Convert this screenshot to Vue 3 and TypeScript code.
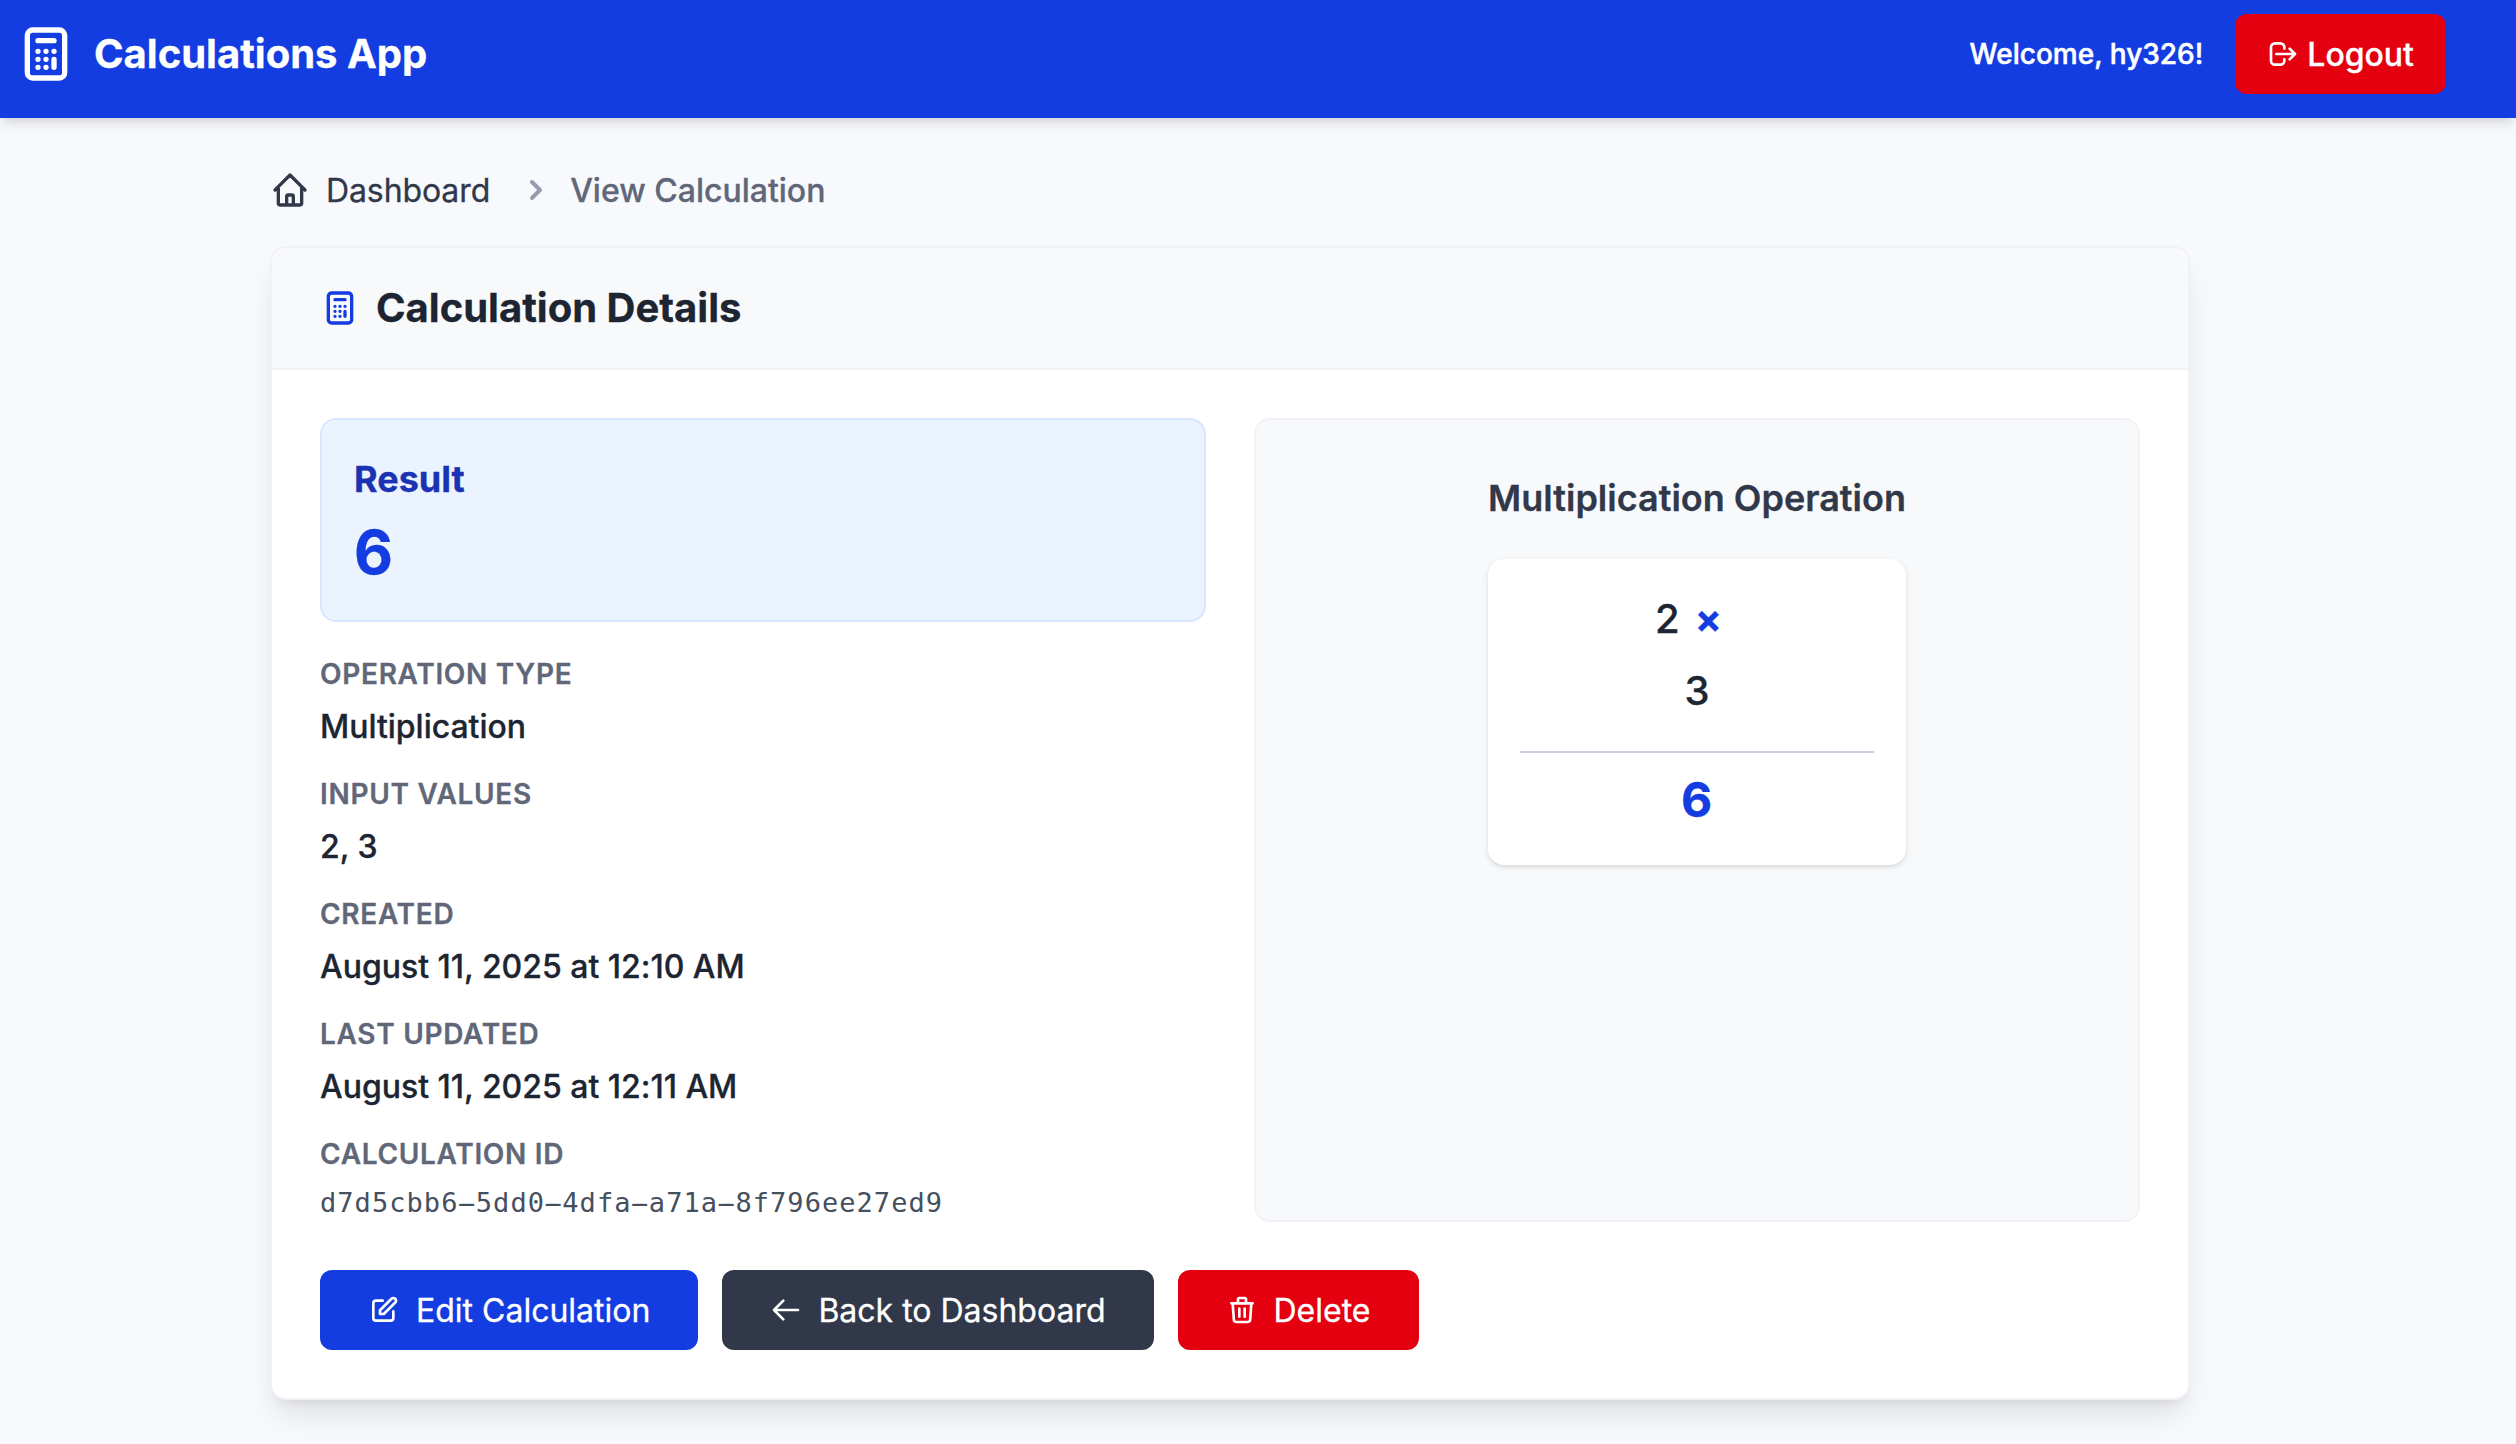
<script setup lang="ts">
interface Detail {
  label: string
  value: string
}

const username = 'hy326'
const inputs: number[] = [2, 3]
const result = inputs.reduce((product, n) => product * n, 1)

const details: Detail[] = [
  { label: 'Operation Type', value: 'Multiplication' },
  { label: 'Input Values', value: inputs.join(', ') },
  { label: 'Created', value: 'August 11, 2025 at 12:10 AM' },
  { label: 'Last Updated', value: 'August 11, 2025 at 12:11 AM' },
]

// The id is split on its hyphens so that they can be drawn at full cell width.
const idParts = 'd7d5cbb6-5dd0-4dfa-a71a-8f796ee27ed9'.split(/(-)/)

const icons = {
  calculator:
    'M9 7h6m0 10v-3m-3 3h.01M9 17h.01M9 14h.01M12 14h.01M15 11h.01M12 11h.01M9 11h.01M7 21h10a2 2 0 002-2V5a2 2 0 00-2-2H7a2 2 0 00-2 2v14a2 2 0 002 2z',
  logout:
    'M17 16l4-4m0 0l-4-4m4 4H7m6 4v1a3 3 0 01-3 3H6a3 3 0 01-3-3V7a3 3 0 013-3h4a3 3 0 013 3v1',
  home: 'M3 12l2-2m0 0l7-7 7 7M5 10v10a1 1 0 001 1h3m10-11l2 2m-2-2v10a1 1 0 01-1 1h-3m-6 0a1 1 0 001-1v-4a1 1 0 011-1h2a1 1 0 011 1v4a1 1 0 001 1m-6 0h6',
  edit: 'M11 5H6a2 2 0 00-2 2v11a2 2 0 002 2h11a2 2 0 002-2v-5m-1.414-9.414a2 2 0 112.828 2.828L11.828 15H9v-2.828l8.586-8.586z',
  back: 'M10 19l-7-7m0 0l7-7m-7 7h18',
  trash:
    'M19 7l-.867 12.142A2 2 0 0116.138 21H7.862a2 2 0 01-1.995-1.858L5 7m5 4v6m4-6v6m1-10V4a1 1 0 00-1-1h-4a1 1 0 00-1 1v3M4 7h16',
}
</script>

<template>
  <div class="page">
    <header class="topbar">
      <div class="topbar-inner">
        <div class="brand">
          <svg class="icon icon-xl" viewBox="0 0 24 24"><path :d="icons.calculator" /></svg>
          <span class="brand-name">Calculations App</span>
        </div>
        <div class="session">
          <span class="welcome">Welcome, {{ username }}!</span>
          <button class="btn btn-logout" type="button">
            <svg class="icon icon-sm" viewBox="0 0 24 24"><path :d="icons.logout" /></svg>
            <span>Logout</span>
          </button>
        </div>
      </div>
    </header>

    <main class="content">
      <nav class="breadcrumb">
        <a class="crumb-link">
          <svg class="icon icon-md" viewBox="0 0 24 24"><path :d="icons.home" /></svg>
          <span>Dashboard</span>
        </a>
        <svg class="chevron" viewBox="0 0 20 20">
          <path
            d="M7.293 14.707a1 1 0 010-1.414L10.586 10 7.293 6.707a1 1 0 011.414-1.414l4 4a1 1 0 010 1.414l-4 4a1 1 0 01-1.414 0z"
          />
        </svg>
        <span class="crumb-current">View Calculation</span>
      </nav>

      <section class="card">
        <div class="card-header">
          <svg class="icon icon-md accent" viewBox="0 0 24 24"><path :d="icons.calculator" /></svg>
          <h1>Calculation Details</h1>
        </div>

        <div class="card-body">
          <div class="columns">
            <div class="summary">
              <div class="result">
                <h2>Result</h2>
                <p>{{ result }}</p>
              </div>
              <dl class="details">
                <div v-for="item in details" :key="item.label" class="detail">
                  <dt>{{ item.label }}</dt>
                  <dd>{{ item.value }}</dd>
                </div>
                <div class="detail">
                  <dt>Calculation ID</dt>
                  <dd class="mono"><span v-for="(part, i) in idParts" :key="i" :class="{ dash: part === '-' }">{{ part }}</span></dd>
                </div>
              </dl>
            </div>

            <div class="visual">
              <h3>Multiplication Operation</h3>
              <div class="sheet">
                <div v-for="(n, i) in inputs" :key="i" class="operand">
                  <span>{{ n }}</span>
                  <span v-if="i < inputs.length - 1" class="operator">×</span>
                </div>
                <div class="rule"></div>
                <div class="total">{{ result }}</div>
              </div>
            </div>
          </div>

          <div class="actions">
            <button class="btn btn-primary" type="button">
              <svg class="icon icon-sm" viewBox="0 0 24 24"><path :d="icons.edit" /></svg>
              <span>Edit Calculation</span>
            </button>
            <button class="btn btn-dark" type="button">
              <svg class="icon icon-sm" viewBox="0 0 24 24"><path :d="icons.back" /></svg>
              <span>Back to Dashboard</span>
            </button>
            <button class="btn btn-danger" type="button">
              <svg class="icon icon-sm" viewBox="0 0 24 24"><path :d="icons.trash" /></svg>
              <span>Delete</span>
            </button>
          </div>
        </div>
      </section>
    </main>
  </div>
</template>

<style>
body {
  margin: 0;
  background: #f8f9fd;
}
</style>

<style scoped>
* {
  box-sizing: border-box;
}

.page {
  min-height: 1444px;
  overflow: hidden;
  background: #f8f9fd;
  color: #1c2531;
  font-family: Inter, 'Liberation Sans', sans-serif;
  font-size: 32px;
  line-height: 48px;
  -webkit-text-stroke: 0.3px currentColor;
}

h1,
h2,
h3,
p,
dl,
dd {
  margin: 0;
}

.icon {
  flex: none;
  fill: none;
  stroke: currentColor;
  stroke-width: 2;
  stroke-linecap: round;
  stroke-linejoin: round;
}

.icon-sm {
  width: 32px;
  height: 32px;
}

.icon-md {
  width: 40px;
  height: 40px;
}

.icon-xl {
  width: 64px;
  height: 64px;
}

.accent {
  color: #143de1;
}

/* Top bar */
.topbar {
  height: 118px;
  background: #143de1;
  color: #fff;
  box-shadow:
    0 8px 12px -2px rgba(0, 0, 0, 0.1),
    0 4px 8px -4px rgba(0, 0, 0, 0.1);
}

.topbar-inner {
  display: flex;
  align-items: center;
  justify-content: space-between;
  width: 2460px;
  height: 108px;
  padding: 0 14px;
}

.brand {
  display: flex;
  align-items: center;
  gap: 16px;
}

.brand-name {
  font-size: 40px;
  line-height: 56px;
  font-weight: 700;
}

.session {
  display: flex;
  align-items: center;
  gap: 32px;
}

.welcome {
  font-size: 28px;
  line-height: 40px;
  font-weight: 500;
  -webkit-text-stroke: 0.5px currentColor;
}

.btn {
  display: inline-flex;
  align-items: center;
  gap: 16px;
  height: 80px;
  padding: 0 48px;
  border: 0;
  border-radius: 12px;
  color: #fff;
  font: inherit;
  white-space: nowrap;
}

.btn span,
.breadcrumb span {
  padding-top: 2px;
}

.btn-logout {
  gap: 8px;
  padding: 0 32px;
  background: #e4000f;
  font-weight: 500;
}

.btn-primary {
  background: #143de1;
}

.btn-dark {
  background: #303849;
}

.btn-danger {
  min-width: 241px;
  background: #e4000f;
}

/* Page body */
.content {
  width: 1920px;
  margin-left: 270px;
  padding-top: 48px;
}

.breadcrumb {
  display: flex;
  align-items: center;
  height: 48px;
  margin-bottom: 32px;
}

.crumb-link {
  display: inline-flex;
  align-items: center;
  gap: 16px;
  color: #303849;
  letter-spacing: -0.1px;
}

.chevron {
  width: 40px;
  height: 40px;
  margin: 0 14px 0 26px;
  fill: #959cae;
}

.crumb-current {
  color: #5f6778;
  font-weight: 500;
}

.card {
  border: 2px solid #f1f2f5;
  border-radius: 16px;
  background: #fff;
  box-shadow:
    0 20px 30px -6px rgba(0, 0, 0, 0.1),
    0 8px 12px -8px rgba(0, 0, 0, 0.1);
}

.card-header {
  display: flex;
  align-items: center;
  gap: 16px;
  height: 122px;
  padding: 0 48px;
  border-bottom: 2px solid #f1f2f5;
  border-radius: 16px 16px 0 0;
  background: #f8f9fb;
}

.card-header h1 {
  font-size: 40px;
  line-height: 56px;
  font-weight: 700;
}

.card-body {
  padding: 48px;
}

.columns {
  display: grid;
  grid-template-columns: 1fr 1fr;
  gap: 48px;
}

.result {
  padding: 32px;
  border: 2px solid #d8e7fe;
  border-radius: 16px;
  background: #ebf3ff;
}

.result h2 {
  margin-bottom: 10px;
  color: #1a33b3;
  font-size: 36px;
  line-height: 54px;
  font-weight: 700;
}

.result p {
  color: #143de1;
  font-size: 60px;
  line-height: 72px;
  font-weight: 700;
}

.details {
  display: flex;
  flex-direction: column;
  gap: 24px;
  margin-top: 32px;
}

.detail dt {
  margin-bottom: 8px;
  color: #5f6778;
  font-size: 28px;
  line-height: 40px;
  font-weight: 600;
  letter-spacing: 0.7px;
  text-transform: uppercase;
}

.detail dd {
  height: 48px;
  font-weight: 500;
  line-height: 50px;
  letter-spacing: -0.02px;
}

.detail dd.mono {
  height: 40px;
  color: #454f5e;
  font-family: 'DejaVu Sans Mono', 'Liberation Mono', monospace;
  font-size: 27px;
  font-weight: 400;
  line-height: 42px;
  letter-spacing: 1.05px;
  -webkit-text-stroke: 0;
}

.dash {
  text-shadow:
    -4px 0 currentColor,
    4px 0 currentColor;
}

.visual {
  display: flex;
  flex-direction: column;
  align-items: center;
  padding: 50px 48px 48px;
  border: 2px solid #f1f2f5;
  border-radius: 16px;
  background: #f8f9fb;
}

.visual h3 {
  margin-bottom: 33px;
  color: #303849;
  font-size: 36px;
  line-height: 56px;
  font-weight: 600;
}

.sheet {
  width: 418px;
  padding: 32px;
  border-radius: 16px;
  background: #fff;
  box-shadow:
    0 2px 6px rgba(0, 0, 0, 0.1),
    0 2px 4px -2px rgba(0, 0, 0, 0.1);
}

.operand {
  display: flex;
  justify-content: center;
  margin-bottom: 16px;
  font-size: 40px;
  line-height: 56px;
  font-weight: 500;
}

.operator {
  margin: 0 17px 0 15px;
  color: #143de1;
  font-weight: 700;
}

.rule {
  height: 2px;
  margin: 32px 0 16px;
  background: #c8cedb;
}

.total {
  padding: 0 1px 2px 0;
  color: #143de1;
  font-size: 48px;
  line-height: 62px;
  font-weight: 700;
  text-align: center;
}

.actions {
  display: flex;
  gap: 24px;
  margin-top: 48px;
}
</style>
